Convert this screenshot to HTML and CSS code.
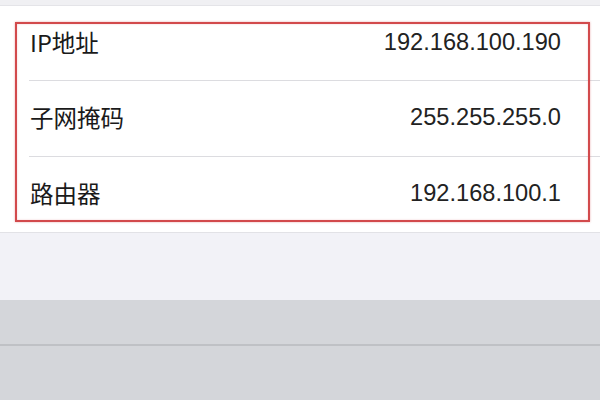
FILE: index.html
```html
<!DOCTYPE html>
<html lang="zh-CN">
<head>
<meta charset="utf-8">
<title>IP</title>
<link rel="stylesheet" href="styles.css">
</head>
<body>
<div class="screen">
  <div class="top-strip"></div>
  <div class="list">
    <div class="row"><span class="label">IP地址</span><span class="value">192.168.100.190</span></div>
    <div class="row"><span class="label">子网掩码</span><span class="value">255.255.255.0</span></div>
    <div class="row"><span class="label">路由器</span><span class="value">192.168.100.1</span></div>
    <div class="highlight"></div>
  </div>
  <div class="gap"></div>
  <div class="sheet">
    <div class="sheet-row"></div>
    <div class="sheet-row"></div>
  </div>
</div>
</body>
</html>
```
FILE: styles.css
```css
* { box-sizing: border-box; }
html, body { margin: 0; padding: 0; }
body {
  width: 600px;
  height: 400px;
  overflow: hidden;
  background: #f2f2f6;
  font-family: "Liberation Sans", "Noto Sans CJK SC", sans-serif;
  color: #1c1c1c;
}
.screen { display: flex; flex-direction: column; height: 400px; }
.top-strip {
  height: 6px;
  background: #f0f0f3;
  border-bottom: 1px solid #e4e4e8;
}
.list {
  position: relative;
  background: #fff;
  border-bottom: 1px solid #e2e2e6;
}
.row {
  height: 76px;
  display: flex;
  align-items: center;
  justify-content: space-between;
  padding: 0 39px 0 30px;
  position: relative;
}
.row:first-child { height: 74px; }
.row:last-child { height: 75px; }
.row + .row::before {
  content: "";
  position: absolute;
  left: 29px;
  right: 0;
  top: 0;
  height: 1px;
  background: #dcdce0;
}
.label {
  font-family: "Noto Sans CJK SC", sans-serif;
  font-size: 23.5px;
  line-height: 1;
  color: #1a1a1a;
}
.value {
  font-size: 23.6px;
  line-height: 1;
  color: #222;
}
.highlight {
  position: absolute;
  left: 15px;
  top: 16px;
  width: 575px;
  height: 200px;
  border: 2px solid #d24a4c;
  box-shadow: 0 0 2px rgba(210, 74, 76, 0.45), inset 0 0 2px rgba(210, 74, 76, 0.3);
}
.gap {
  height: 67px;
  background: #f2f2f7;
}
.sheet {
  flex: 1;
  background: #d4d6da;
  display: flex;
  flex-direction: column;
}
.sheet-row { height: 44px; }
.sheet-row + .sheet-row {
  flex: 1;
  border-top: 2px solid #bfc1c5;
}
```
